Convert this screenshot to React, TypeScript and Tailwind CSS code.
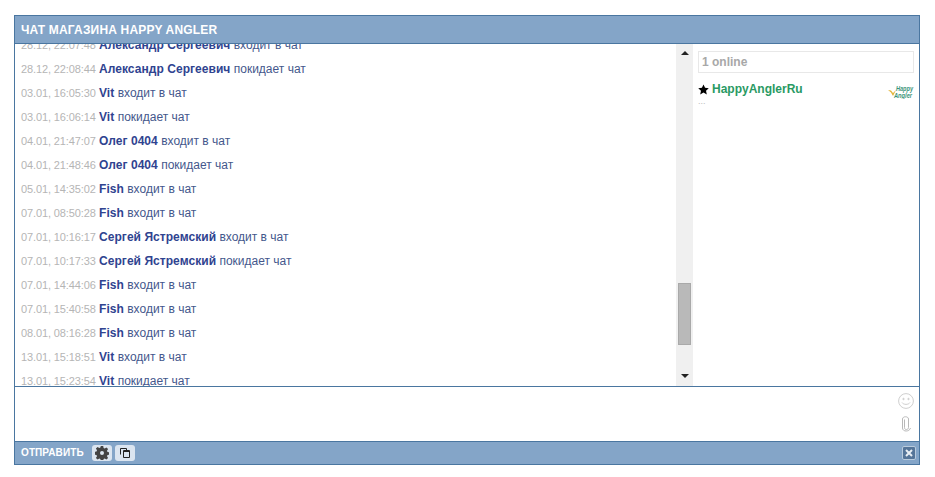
const messages = [
  ['28.12, 22:07:48', 'Александр Сергеевич', 'входит в чат'],
  ['28.12, 22:08:44', 'Александр Сергеевич', 'покидает чат'],
  ['03.01, 16:05:30', 'Vit', 'входит в чат'],
  ['03.01, 16:06:14', 'Vit', 'покидает чат'],
  ['04.01, 21:47:07', 'Олег 0404', 'входит в чат'],
  ['04.01, 21:48:46', 'Олег 0404', 'покидает чат'],
  ['05.01, 14:35:02', 'Fish', 'входит в чат'],
  ['07.01, 08:50:28', 'Fish', 'входит в чат'],
  ['07.01, 10:16:17', 'Сергей Ястремский', 'входит в чат'],
  ['07.01, 10:17:33', 'Сергей Ястремский', 'покидает чат'],
  ['07.01, 14:44:06', 'Fish', 'входит в чат'],
  ['07.01, 15:40:58', 'Fish', 'входит в чат'],
  ['08.01, 08:16:28', 'Fish', 'входит в чат'],
  ['13.01, 15:18:51', 'Vit', 'входит в чат'],
  ['13.01, 15:23:54', 'Vit', 'покидает чат'],
];

export default function App() {
  return (
    <div className="h-[477px] w-[935px] bg-white pt-[15px] pl-[14px] font-['Liberation_Sans',Arial,sans-serif] text-xs">
      <div className="flex h-[450px] w-[906px] flex-col border border-[#4a76a0]">
        <div className="flex h-[27px] items-center bg-[#84a5c8] pl-[6px] text-xs font-bold tracking-[0.17px] text-white">
          ЧАТ МАГАЗИНА HAPPY ANGLER
        </div>

        <div className="flex h-[344px] border-t border-b border-[#4a76a0]">
          <div className="w-[661px] overflow-hidden">
            <div className="-mt-[11px] pl-[6px]">
              {messages.map(([time, name, action]) => (
                <div key={time} className="h-6 leading-6 whitespace-nowrap">
                  <span className="text-[11px] tracking-[-0.12px] text-[#b5b5b5]">{time}</span>{' '}
                  <span className="font-bold tracking-[0.05px] text-[#2f4390]">{name}</span>{' '}
                  <span className="text-[#44578c]">{action}</span>
                </div>
              ))}
            </div>
          </div>

          <div className="flex w-[17px] flex-col items-center bg-[#f0f0f0]">
            <div className="mt-[7px] h-0 w-0 border-x-[4px] border-b-[4px] border-x-transparent border-b-[#222]" />
            <div className="mt-[228px] h-[62px] w-[13px] border border-[#a9a9a9] bg-[#b9b9b9]" />
            <div className="mt-[29px] h-0 w-0 border-x-[4px] border-t-[4px] border-x-transparent border-t-[#222]" />
          </div>

          <div className="flex-1 px-[5px] pt-[7px]">
            <div className="flex h-[22px] items-center border border-[#e8e8e8] pl-[3px] text-xs font-bold text-[#a8a8a8]">
              1 online
            </div>
            <div className="mt-[8px] flex items-start">
              <div className="flex-1">
                <div className="flex items-center leading-4">
                  <svg width="11" height="11" viewBox="0 0 24 24" fill="#000" className="mr-[3px]">
                    <path d="M12 1l3.400 7.400 8.100.9-6 5.500 1.700 8L12 18.800 4.800 22.800l1.700-8-6-5.500 8.100-.9z" />
                  </svg>
                  <span className="font-bold text-[#2a9a63]">HappyAnglerRu</span>
                </div>
                <div className="-mt-[2px] text-[9px] leading-3 text-[#bbb]">...</div>
              </div>
              <svg width="26" height="14" viewBox="0 0 26 14" className="mt-[4px]">
                <path d="M0 5l3 .5 2 2.500 3-3-3 6-2-3.500z" fill="#e3b53a" />
                <text x="8" y="6" fontSize="7" fontWeight="700" fontStyle="italic" textLength="17" lengthAdjust="spacingAndGlyphs" fill="#3a9479">
                  Happy
                </text>
                <text x="6" y="12.500" fontSize="7" fontWeight="700" fontStyle="italic" textLength="18" lengthAdjust="spacingAndGlyphs" fill="#3a9479">
                  Angler
                </text>
              </svg>
            </div>
          </div>
        </div>

        <div className="flex h-[54px] justify-end">
          <div className="flex w-[26px] flex-col items-center pt-[6px]">
            <svg width="16" height="16" viewBox="0 0 16 16" fill="none" stroke="#cfcfcf" strokeWidth="1">
              <circle cx="8" cy="8" r="7.400" />
              <path d="M4 9.500c1.500 2.500 6.500 2.500 8 0" />
              <circle cx="5.500" cy="6" r=".7" fill="#cfcfcf" />
              <circle cx="10.500" cy="6" r=".7" fill="#cfcfcf" />
            </svg>
            <svg width="10" height="16" viewBox="0 0 10 16" fill="none" stroke="#b8b8b8" className="mt-[7px]">
              <path d="M3.500 3.500v8c0 1.500 1 2 1.500 2h.5c1 0 2-.7 2-2V3c0-3-6-3-6 0v9c0 4 7 4 8 0" />
            </svg>
          </div>
        </div>

        <div className="flex h-[23px] items-center border-t border-[#4a76a0] bg-[#84a5c8] pr-[3px] pl-[6px]">
          <span className="text-[10px] font-bold tracking-[0.1px] text-white">ОТПРАВИТЬ</span>
          <div className="ml-[8px] flex h-[16px] w-[20px] items-center justify-center rounded-[3px] bg-[#dbe5f0]">
            <svg width="14" height="14" viewBox="0 0 14 14">
              <path
                fill="#444"
                fillRule="evenodd"
                d="M5.800 0h2.400l.4 2 1.100.5 1.700-1.100 1.700 1.700-1.100 1.700.5 1.100 2 .4v2.400l-2 .4-.5 1.100 1.100 1.700-1.700 1.700-1.700-1.100-1.100.5-.4 2H5.800l-.4-2-1.100-.5-1.700 1.100-1.700-1.700 1.100-1.700-.5-1.100-2-.4V5.800l2-.4.5-1.100-1.100-1.700 1.700-1.700 1.700 1.100 1.100-.5zM7 5a2 2 0 100 4 2 2 0 000-4z"
              />
            </svg>
          </div>
          <div className="ml-[3px] flex h-[16px] w-[20px] items-center justify-center rounded-[3px] bg-[#dbe5f0]">
            <svg width="10" height="10" viewBox="0 0 10 10" fill="none" stroke="#222">
              <path d="M.5 6.500v-6h6v2" />
              <path d="M3.500 2.500h6v7h-6z" />
              <path d="M3.500 3.500h6" />
            </svg>
          </div>
          <div className="ml-auto flex h-[14px] w-[14px] items-center justify-center rounded-[2px] border border-[#b9cbdd] bg-[#557599]">
            <svg width="8" height="8" viewBox="0 0 8 8" stroke="#e8eef4" strokeWidth="2">
              <path d="M1 1l6 6M7 1L1 7" />
            </svg>
          </div>
        </div>
      </div>
    </div>
  );
}
